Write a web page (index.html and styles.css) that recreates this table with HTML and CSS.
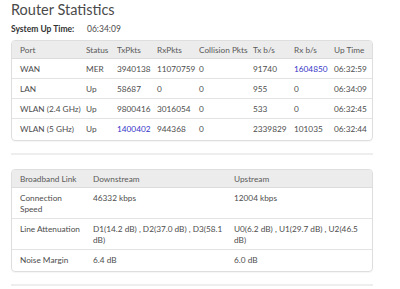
FILE: index.html
```html
<!DOCTYPE html>
<html lang="en">
<head>
    <meta charset="UTF-8">
    <title>Router Statistics</title>
    <link rel="stylesheet" href="styles.css">
</head>
<body>
    <div class="page">
        <h1 class="title">Router Statistics</h1>

        <div class="uptime">
            <span class="uptime-label">System Up Time:</span>
            <span class="uptime-value">06:34:09</span>
        </div>

        <div class="panel">
            <table class="stats ports">
                <colgroup>
                    <col style="width:66px"><col style="width:31px"><col style="width:40px"><col style="width:42px">
                    <col style="width:54px"><col style="width:41px"><col style="width:40px"><col style="width:48px">
                </colgroup>
                <thead>
                    <tr>
                        <th>Port</th><th>Status</th><th>TxPkts</th><th>RxPkts</th>
                        <th>Collision Pkts</th><th>Tx b/s</th><th>Rx b/s</th><th>Up Time</th>
                    </tr>
                </thead>
                <tbody>
                    <tr>
                        <td>WAN</td><td>MER</td><td>3940138</td><td>11070759</td>
                        <td>0</td><td>91740</td><td class="link">1604850</td><td>06:32:59</td>
                    </tr>
                    <tr>
                        <td>LAN</td><td>Up</td><td>58687</td><td>0</td>
                        <td>0</td><td>955</td><td>0</td><td>06:34:09</td>
                    </tr>
                    <tr>
                        <td>WLAN (2.4 GHz)</td><td>Up</td><td>9800416</td><td>3016054</td>
                        <td>0</td><td>533</td><td>0</td><td>06:32:45</td>
                    </tr>
                    <tr>
                        <td>WLAN (5 GHz)</td><td>Up</td><td class="link">1400402</td><td>944368</td>
                        <td>0</td><td>2339829</td><td>101035</td><td>06:32:44</td>
                    </tr>
                </tbody>
            </table>
        </div>

        <hr class="divider">

        <div class="panel">
            <table class="stats broadband">
                <colgroup>
                    <col style="width:73px"><col style="width:141px"><col style="width:148px">
                </colgroup>
                <thead>
                    <tr><th>Broadband Link</th><th>Downstream</th><th>Upstream</th></tr>
                </thead>
                <tbody>
                    <tr><td>Connection Speed</td><td>46332 kbps</td><td>12004 kbps</td></tr>
                    <tr>
                        <td>Line Attenuation</td>
                        <td>D1(14.2 dB) , D2(37.0 dB) , D3(58.1 dB)</td>
                        <td>U0(6.2 dB) , U1(29.7 dB) , U2(46.5 dB)</td>
                    </tr>
                    <tr><td>Noise Margin</td><td>6.4 dB</td><td>6.0 dB</td></tr>
                </tbody>
            </table>
        </div>

        <hr class="divider">
    </div>
</body>
</html>
```

FILE: styles.css
```css
* {
    margin: 0;
    padding: 0;
    box-sizing: border-box;
}

body {
    font-family: Lato, 'Noto Sans', sans-serif;
    color: #4d4d4d;
    background: #fff;
}

.page {
    width: 373px;
    padding: 2px 0 0 11px;
}

.title {
    font-size: 14.5px;
    font-weight: 400;
    line-height: 16px;
    color: #4a4a4a;
}

.uptime {
    display: flex;
    font-size: 8.5px;
    line-height: 11px;
    margin-top: 6px;
}

.uptime-label {
    font-weight: 700;
    color: #333;
    width: 76px;
}

.uptime-value {
    color: #4d4d4d;
}

.panel {
    margin-top: 5px;
    border: 1px solid #dedede;
    border-radius: 4px;
    overflow: hidden;
    padding-bottom: 2px;
    box-shadow: 0 1px 1px rgba(0, 0, 0, 0.04);
}

.stats {
    width: 100%;
    table-layout: fixed;
    border-collapse: collapse;
    font-size: 8.25px;
    line-height: 11px;
}

.stats th {
    background: #ececec;
    font-weight: 400;
    text-align: left;
    padding: 4px 2px 2px 8px;
    height: 17px;
    color: #5a5a5a;
    border-bottom: 1px solid #dcdcdc;
    white-space: nowrap;
}

.stats td {
    text-align: left;
    vertical-align: top;
    padding: 5px 9px 3px 8px;
    border-bottom: 1px solid #e3e3e3;
}

.ports td {
    padding-right: 0;
    white-space: nowrap;
}

.broadband td:nth-child(1) {
    padding-right: 3px;
}

.broadband td:nth-child(2) {
    padding-right: 0;
}

.broadband td:nth-child(3) {
    padding-right: 12px;
}

.stats tbody tr:last-child td {
    border-bottom: none;
}

.link {
    color: #3434c8;
}

.divider {
    border: none;
    height: 2px;
    background: #eeeeee;
    margin: 12px 0 14px;
}
```
